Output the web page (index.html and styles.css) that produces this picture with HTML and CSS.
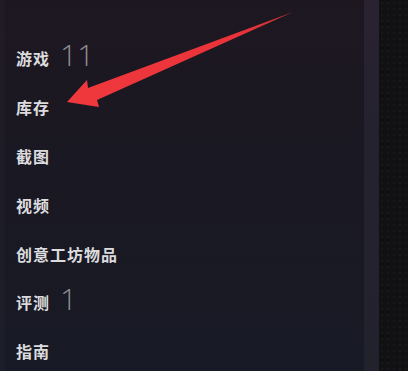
FILE: index.html
```html
<!DOCTYPE html>
<html lang="zh-CN">
<head>
<meta charset="utf-8">
<link rel="stylesheet" href="styles.css">
</head>
<body>
<div class="frame">
  <nav class="panel">
    <ul class="menu">
      <li class="item"><span class="label">游戏</span><span class="count">11</span></li>
      <li class="item"><span class="label">库存</span></li>
      <li class="item"><span class="label">截图</span></li>
      <li class="item"><span class="label">视频</span></li>
      <li class="item"><span class="label">创意工坊物品</span></li>
      <li class="item"><span class="label">评测</span><span class="count">1</span></li>
      <li class="item"><span class="label">指南</span></li>
    </ul>
  </nav>
  <div class="edge"></div>
  <div class="backdrop"></div>
  <svg class="arrow" width="408" height="371" viewBox="0 0 408 371">
    <defs>
      <linearGradient id="ag" x1="67" y1="102" x2="293" y2="13" gradientUnits="userSpaceOnUse">
        <stop offset="0" stop-color="#f0393d"/>
        <stop offset="0.75" stop-color="#ea3339"/>
        <stop offset="1" stop-color="#c8343c"/>
      </linearGradient>
    </defs>
    <polygon fill="url(#ag)" points="67,102 87,80 88,88 293,12 97,100 99,107"/>
  </svg>
</div>
</body>
</html>
```
FILE: styles.css
```css
html, body {
  margin: 0;
  padding: 0;
  width: 408px;
  height: 371px;
  overflow: hidden;
  background: #111014;
}
.frame {
  position: relative;
  display: flex;
  width: 408px;
  height: 371px;
}
.panel {
  width: 364px;
  height: 371px;
  background: linear-gradient(180deg, #1d1720 0%, #1a1822 40%, #181a25 100%);
  box-shadow: inset 5px 0 0 rgba(255,255,255,0.02);
}
.menu {
  list-style: none;
  margin: 0;
  padding: 34px 0 0 16px;
  display: flex;
  flex-direction: column;
}
.item {
  height: 48.8px;
  display: flex;
  align-items: center;
  gap: 10px;
}
.label {
  font-family: "Noto Sans CJK SC", "Microsoft YaHei", sans-serif;
  font-weight: 700;
  font-size: 16px;
  letter-spacing: 1px;
  color: #dcdcdf;
  line-height: 1;
}
.count {
  font-family: "Open Sans", "Lato", sans-serif;
  font-weight: 300;
  font-size: 30px;
  color: #8e8e94;
  line-height: 1;
  margin-top: -7px;
}
.edge {
  width: 15px;
  height: 371px;
  background: linear-gradient(180deg, #2a2230 0%, #24222f 40%, #22222d 100%);
}
.backdrop {
  flex: 1;
  height: 371px;
  background-color: #111013;
  background-image: radial-gradient(circle, #18171b 1px, transparent 1.5px);
  background-size: 6px 6px;
}
.arrow {
  position: absolute;
  left: 0;
  top: 0;
}
```
